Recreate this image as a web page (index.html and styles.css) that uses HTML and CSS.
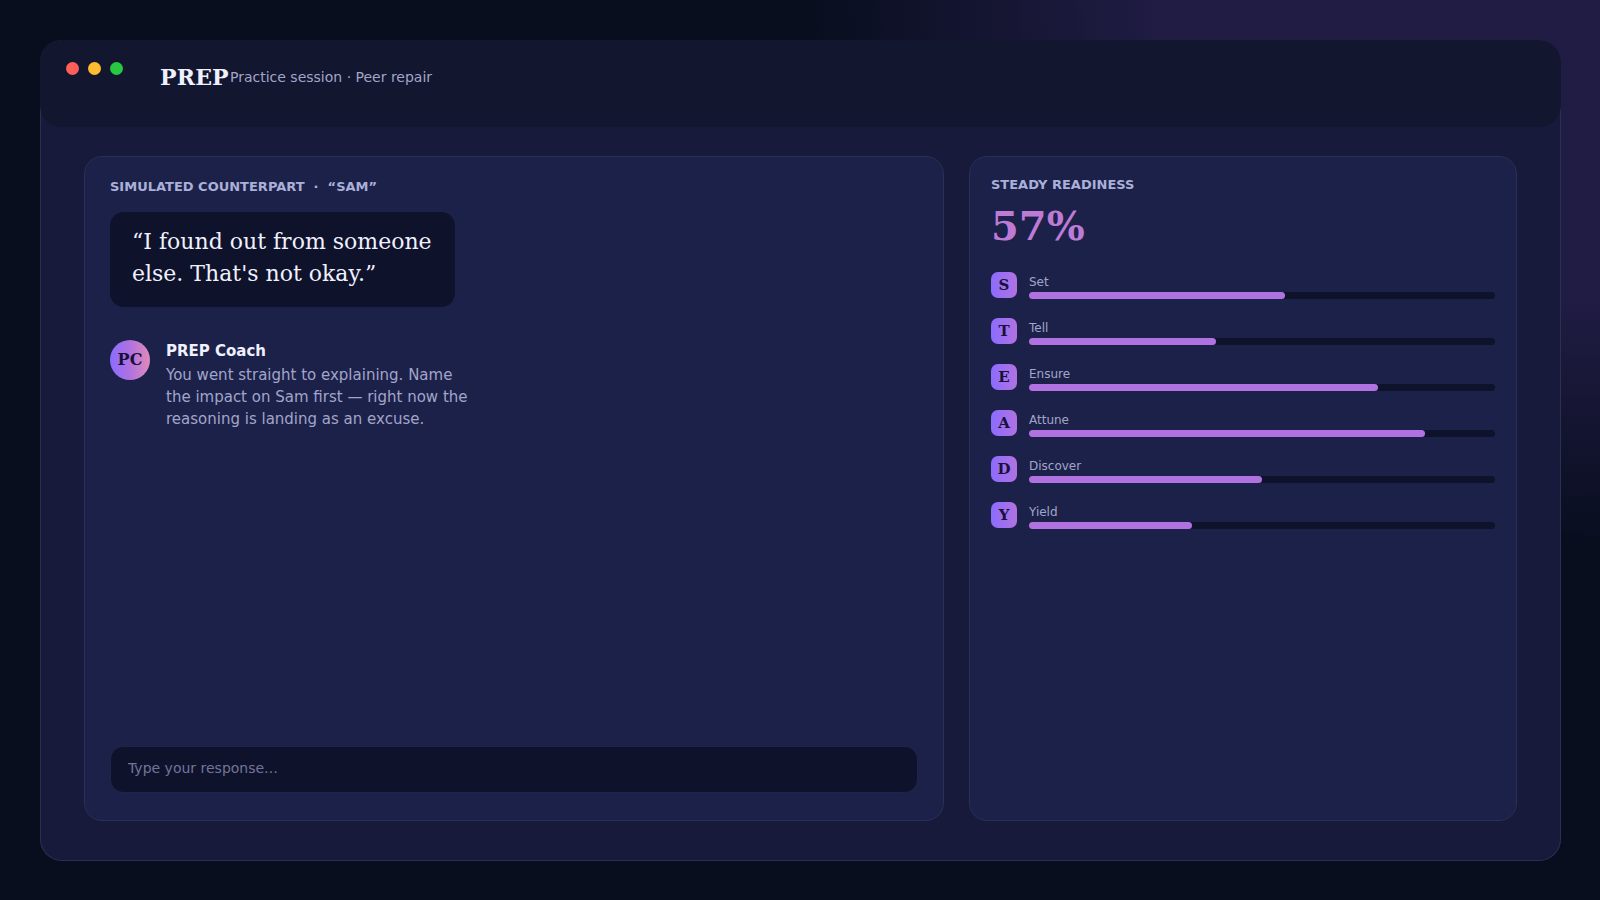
FILE: index.html
```
<!DOCTYPE html>
<html lang="en">
<head>
	<meta charset="UTF-8">
	<meta name="viewport" content="width=device-width, initial-scale=1.0">
	<title>PREP - Practice session</title>
	<link rel="stylesheet" href="styles.css">
</head>
<body>
	<div class="window">
		<header class="titlebar">
			<div class="dots">
				<i class="dot red"></i>
				<i class="dot yellow"></i>
				<i class="dot green"></i>
			</div>
			<h1 class="brand">PREP</h1>
			<span class="session">Practice session · Peer repair</span>
		</header>
		<main class="content">
			<section class="panel chat">
				<h2 class="label">SIMULATED COUNTERPART &nbsp;·&nbsp; “SAM”</h2>
				<blockquote class="bubble">“I found out from someone<br>else. That's not okay.”</blockquote>
				<div class="coach">
					<div class="avatar">PC</div>
					<div class="coach-body">
						<h3>PREP Coach</h3>
						<p>You went straight to explaining. Name<br>the impact on Sam first — right now the<br>reasoning is landing as an excuse.</p>
					</div>
				</div>
				<input class="response" type="text" placeholder="Type your response…">
			</section>
			<section class="panel readiness">
				<h2 class="label">STEADY READINESS</h2>
				<div class="score">57%</div>
				<ul class="steps">
					<li><b class="letter">S</b><div class="step"><span>Set</span><div class="track"><div class="fill" style="width: 55%"></div></div></div></li>
					<li><b class="letter">T</b><div class="step"><span>Tell</span><div class="track"><div class="fill" style="width: 40.1%"></div></div></div></li>
					<li><b class="letter">E</b><div class="step"><span>Ensure</span><div class="track"><div class="fill" style="width: 74.9%"></div></div></div></li>
					<li><b class="letter">A</b><div class="step"><span>Attune</span><div class="track"><div class="fill" style="width: 85%"></div></div></div></li>
					<li><b class="letter">D</b><div class="step"><span>Discover</span><div class="track"><div class="fill" style="width: 50%"></div></div></div></li>
					<li><b class="letter">Y</b><div class="step"><span>Yield</span><div class="track"><div class="fill" style="width: 35%"></div></div></div></li>
				</ul>
			</section>
		</main>
	</div>
</body>
</html>
```
FILE: styles.css
```
*{margin: 0; padding: 0; box-sizing: border-box;}
ul, li{list-style: none;}
body{height: 900px; padding: 40px 39px 39px 40px; overflow: hidden; font-family: "DejaVu Sans", sans-serif; color: #f0f1ff; background: radial-gradient(ellipse 790px 540px at 100% 0, #201c44 0, #201c44 55%, rgba(32,28,68,0) 100%), #090e1f;}

.window{display: flex; flex-direction: column; height: 821px; border-radius: 22px; background: #171a3a; box-shadow: inset 0 0 0 1px #2b2f50;}
.titlebar{display: flex; height: 87px; padding: 22px 26px; border-radius: 22px; background: #12162f;}
.dots{display: flex; gap: 9px; width: 94px;}
.dot{width: 13px; height: 13px; border-radius: 50%;}
.red{background: #ff5f57;}
.yellow{background: #febc2e;}
.green{background: #28c840;}
.brand{width: 70px; font: bold 22px/30px "DejaVu Serif", serif; letter-spacing: .15px;}
.session{font-size: 14px; line-height: 30px; color: #a2a5c9;}

.content{display: flex; flex: 1; gap: 25px; padding: 29px 44px 40px;}
.panel{display: flex; flex-direction: column; border: 1px solid #2b2f57; border-radius: 18px; background: #1c2149;}
.label{font-size: 13px; line-height: 16px; color: #aab0d8;}

.chat{width: 860px; padding: 22px 25px 27px;}
.bubble{width: 345px; height: 95px; margin-top: 17px; padding: 14px 22px; border-radius: 14px; background: #0f122b; font: 22px/32px "DejaVu Serif", serif; white-space: nowrap;}
.coach{display: flex; gap: 16px; margin-top: 33px;}
.avatar{width: 40px; height: 40px; border-radius: 50%; background: linear-gradient(90deg, #8b6cff, #b072e0 50%, #e08bb8); color: #1a1038; font: bold 16px/40px "DejaVu Serif", serif; text-align: center;}
.coach h3{font-size: 15px; line-height: 22px;}
.coach p{margin-top: 2px; font-size: 15px; line-height: 22px; color: #a2a5c9;}
.response{height: 47px; margin-top: auto; padding: 0 17px 3px; border: 1px solid #20244a; border-radius: 13px; background: #0f122b; font: 14px "DejaVu Sans", sans-serif; color: #f0f1ff;}
.response::placeholder{color: #72759a; opacity: 1;}

.readiness{width: 548px; padding: 20px 21px;}
.score{margin-top: 7px; font: bold 40px/52px "DejaVu Serif", serif; color: #bd7bd6;}
.steps{margin-top: 20px;}
.steps li{display: flex; gap: 12px; height: 46px;}
.letter{width: 26px; height: 26px; border-radius: 7px; background: linear-gradient(90deg, #8b6cff, #b072e0); color: #1a1038; font: bold 15px/27px "DejaVu Serif", serif; text-align: center;}
.step{flex: 1;}
.step span{display: block; height: 20px; font-size: 12px; line-height: 20px; color: #a2a5c9;}
.track{height: 7px; border-radius: 4px; background: #0f122b;}
.fill{height: 7px; border-radius: 4px; background: #b072e0;}
```
